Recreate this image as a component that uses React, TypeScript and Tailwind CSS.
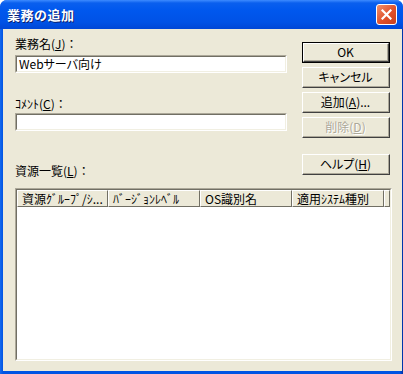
import React from "react"

const font = { fontFamily: '"Noto Sans CJK JP", "Liberation Sans", sans-serif' }

function Btn({ children, primary, disabled }: { children: React.ReactNode; primary?: boolean; disabled?: boolean }) {
  return (
    <div className={"h-[21px] w-[88px] " + (primary ? "border border-black" : "")}>
      <div className="h-full w-full border-t border-l border-t-white border-l-white border-b border-r border-b-[#404040] border-r-[#404040]">
        <div className="h-full w-full border-b border-r border-b-[#aca899] border-r-[#aca899] bg-[#ece9d8] flex items-center justify-center text-[12px] leading-none [font-feature-settings:'palt']">
          <span className={disabled ? "text-[#aca899] [text-shadow:1px_1px_0_#fff]" : "text-black"}>{children}</span>
        </div>
      </div>
    </div>
  )
}

function Field({ value }: { value?: string }) {
  return (
    <div className="w-full border-t border-l border-t-[#aca899] border-l-[#aca899] border-b border-r border-b-white border-r-white">
      <div className="h-[16px] border-t border-l border-t-[#716f64] border-l-[#716f64] border-b border-r border-b-[#f1efe2] border-r-[#f1efe2] bg-white flex items-center pl-[2px] text-[12px] leading-none [font-feature-settings:'palt']">
        {value}
      </div>
    </div>
  )
}

function HeadCell({ label, w }: { label: string; w: string }) {
  return (
    <div className={w + " h-full shrink-0 border-t border-l border-t-white border-l-white border-b border-r border-b-[#716f64] border-r-[#716f64] bg-[#ece9d8] flex items-center pl-[4px] text-[12px] leading-none whitespace-nowrap overflow-hidden"}>
      {label}
    </div>
  )
}

export default function App() {
  return (
    <div className="w-[403px] h-[374px] flex flex-col bg-[#0054e3] rounded-t-[7px] overflow-hidden" style={font}>
      {/* title bar */}
      <div className="h-[29px] shrink-0 flex items-center justify-between pl-[7px] pr-[6px] bg-[linear-gradient(to_bottom,#3d8bff_0px,#0a5fee_3px,#0058ee_10px,#0052e6_22px,#0047d6_29px)]">
        <span className="text-white font-bold text-[13px] tracking-[0.5px] [text-shadow:1px_1px_0_#0a1e6e]">業務の追加</span>
        <div className="w-[21px] h-[21px] rounded-[3px] border border-white bg-[linear-gradient(135deg,#f0916c,#e0502a_55%,#c8401c)] flex items-center justify-center">
          <svg width="11" height="11" viewBox="0 0 11 11">
            <path d="M1.5 1.5 L9.5 9.5 M9.5 1.5 L1.5 9.5" stroke="#fff" strokeWidth="2.2" strokeLinecap="square" />
          </svg>
        </div>
      </div>

      {/* body */}
      <div className="flex-1 flex px-[3px] pb-[3px] bg-[linear-gradient(to_right,#166aee,#0054e3_3px,#0054e3_calc(100%-3px),#0030a0)]">
        <div className="flex-1 bg-[#ece9d8] pl-[12px] pr-[10px] pt-[7px] flex flex-col text-black">
          <div className="flex gap-[15px]">
            <div className="w-[272px] flex flex-col">
              <div className="h-4 text-[12px] leading-4">
                業務名(<span className="underline">J</span>)：
              </div>
              <div className="mt-[3px]">
                <Field value="Webサーバ向け" />
              </div>
              <div className="mt-[23px] h-4 text-[12px] leading-4">
                ｺﾒﾝﾄ(<span className="underline">C</span>)：
              </div>
              <div className="mt-[1px]">
                <Field />
              </div>
              <div className="mt-[32px] h-4 text-[12px] leading-4">
                資源一覧(<span className="underline">L</span>)：
              </div>
            </div>
            <div className="flex flex-col gap-[4px] pt-[6px]">
              <Btn primary>OK</Btn>
              <Btn>キャンセル</Btn>
              <Btn>
                追加(<span className="underline">A</span>)...
              </Btn>
              <Btn disabled>
                削除(<span className="underline">D</span>)
              </Btn>
              <div className="mt-[12px]">
                <Btn>
                  ヘルプ(<span className="underline">H</span>)
                </Btn>
              </div>
            </div>
          </div>

          {/* list view */}
          <div className="mt-[9px] h-[173px] border-t border-l border-t-[#aca899] border-l-[#aca899] border-b border-r border-b-white border-r-white">
            <div className="h-full border-t border-l border-t-[#716f64] border-l-[#716f64] border-b border-r border-b-[#f1efe2] border-r-[#f1efe2] bg-white flex flex-col">
              <div className="h-[17px] flex bg-[#ece9d8]">
                <HeadCell w="w-[91px]" label="資源ｸﾞﾙｰﾌﾟ/ｼ..." />
                <HeadCell w="w-[92px]" label="ﾊﾞｰｼﾞｮﾝﾚﾍﾞﾙ" />
                <HeadCell w="w-[92px]" label="OS識別名" />
                <HeadCell w="w-[92px]" label="適用ｼｽﾃﾑ種別" />
                <HeadCell w="w-[4px]" label="" />
              </div>
              <div className="flex-1" />
            </div>
          </div>
        </div>
      </div>
    </div>
  )
}
